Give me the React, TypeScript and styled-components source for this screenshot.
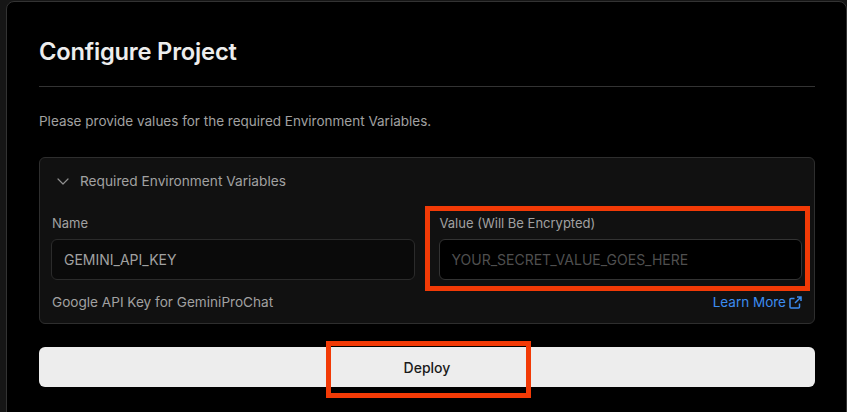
import React from "react";
import styled, { createGlobalStyle } from "styled-components";

const GlobalStyle = createGlobalStyle`
  html, body { margin: 0; padding: 0; background: #161616; }
  body { font-family: Inter, "Noto Sans", sans-serif; -webkit-font-smoothing: antialiased; }
  * { box-sizing: border-box; }
`;

const Page = styled.div`
  width: 847px;
  height: 412px;
  overflow: hidden;
  padding: 1px 0 0 6px;
`;

const Card = styled.div`
  width: 841px;
  height: 420px;
  background: #000;
  border: 1px solid #333;
  border-radius: 8px 8px 0 0;
  padding: 36px 31px 0 32px;
`;

const Title = styled.h1`
  margin: 0;
  font-size: 23.7px;
  line-height: 28px;
  font-weight: 600;
  color: #ededed;
  letter-spacing: -0.2px;
`;

const Divider = styled.hr`
  margin: 20px 0 0;
  border: 0;
  border-top: 1px solid #333;
`;

const Description = styled.p`
  margin: 24px 0 0;
  font-size: 13.5px;
  line-height: 20px;
  color: #a1a1a1;
`;

const Panel = styled.section`
  margin-top: 26px;
  background: #111;
  border: 1px solid #2e2e2e;
  border-radius: 6px;
  padding: 0 12px 12px 11px;
`;

const PanelHeader = styled.div`
  display: flex;
  align-items: center;
  gap: 11px;
  height: 46px;
  padding-left: 6px;
  font-size: 13.7px;
  color: #a1a1a1;
`;

const Fields = styled.div`
  display: grid;
  grid-template-columns: 1fr 1fr;
  column-gap: 24px;
  margin-top: 11px;
`;

const Field = styled.div`
  position: relative;
  display: flex;
  flex-direction: column;
  gap: 8px;
`;

const Label = styled.label`
  font-size: 13px;
  line-height: 16px;
  color: #a1a1a1;
  padding-left: 1px;
`;

const Input = styled.div<{ $placeholder?: boolean; $dark?: boolean }>`
  height: 41px;
  display: flex;
  align-items: center;
  padding: 0 12px;
  border-radius: 6px;
  border: 1px solid ${(p) => (p.$dark ? "#333" : "#2b2b2b")};
  background: ${(p) => (p.$dark ? "#000" : "#0a0a0a")};
  font-size: 14px;
  color: ${(p) => (p.$placeholder ? "#4f4f4f" : "#a1a1a1")};
`;

const Footer = styled.div`
  display: flex;
  justify-content: space-between;
  align-items: center;
  margin-top: 13px;
  font-size: 13.6px;
  line-height: 18px;
  color: #a1a1a1;
  padding-left: 1px;
`;

const LearnMore = styled.a`
  display: inline-flex;
  align-items: center;
  gap: 3px;
  color: #3c8cf0;
  text-decoration: none;
  font-size: 13.5px;
`;

const DeployWrap = styled.div`
  position: relative;
  margin-top: 23px;
`;

const DeployButton = styled.button`
  width: 100%;
  height: 40px;
  border: 0;
  border-radius: 6px;
  background: #ededed;
  color: #1a1a1a;
  font-family: Inter, sans-serif;
  font-size: 14px;
  font-weight: 500;
`;

const Annotation = styled.div<{ $l: number; $t: number; $w: number; $h: number }>`
  position: absolute;
  left: ${(p) => p.$l}px;
  top: ${(p) => p.$t}px;
  width: ${(p) => p.$w}px;
  height: ${(p) => p.$h}px;
  border: 5px solid #f23a06;
  pointer-events: none;
`;

const Chevron = () => (
  <svg width="12" height="12" viewBox="0 0 12 12" fill="none">
    <path d="M1 4l5 5 5-5" stroke="#8f8f8f" strokeWidth="1.2" strokeLinecap="round" strokeLinejoin="round" />
  </svg>
);

const ExternalIcon = () => (
  <svg width="13" height="13" viewBox="0 0 13 13" fill="none">
    <path d="M10.5 7.5v3.5a1 1 0 0 1-1 1H2a1 1 0 0 1-1-1V3.5a1 1 0 0 1 1-1h3.5" stroke="#3c8cf0" strokeWidth="1.5" />
    <path d="M8 1h4v4M12 1L6 7" stroke="#3c8cf0" strokeWidth="1.5" />
  </svg>
);

export default function App() {
  return (
    <>
      <GlobalStyle />
      <Page>
        <Card>
          <Title>Configure Project</Title>
          <Divider />
          <Description>Please provide values for the required Environment Variables.</Description>
          <Panel>
            <PanelHeader>
              <Chevron />
              <span>Required Environment Variables</span>
            </PanelHeader>
            <Fields>
              <Field>
                <Label>Name</Label>
                <Input>GEMINI_API_KEY</Input>
              </Field>
              <Field>
                <Label>Value (Will Be Encrypted)</Label>
                <Input $dark $placeholder>YOUR_SECRET_VALUE_GOES_HERE</Input>
                <Annotation $l={-14} $t={-9} $w={385} $h={85} />
              </Field>
            </Fields>
            <Footer>
              <span>Google API Key for GeminiProChat</span>
              <LearnMore href="#">
                Learn More
                <ExternalIcon />
              </LearnMore>
            </Footer>
          </Panel>
          <DeployWrap>
            <DeployButton>Deploy</DeployButton>
            <Annotation $l={287} $t={-6} $w={205} $h={57} />
          </DeployWrap>
        </Card>
      </Page>
    </>
  );
}
